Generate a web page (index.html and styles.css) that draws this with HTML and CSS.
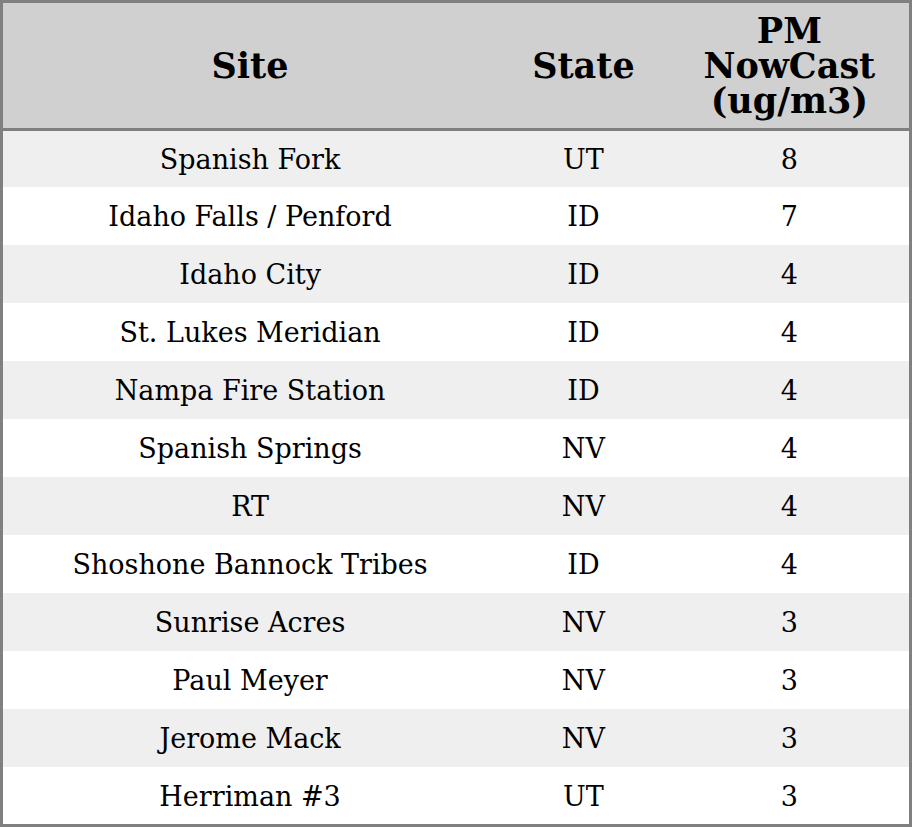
FILE: index.html
```html
<!DOCTYPE html>
<html>
<head>
<meta charset="utf-8">
<link rel="stylesheet" href="styles.css">
</head>
<body>
<table class="aq">
  <colgroup>
    <col class="c-site">
    <col class="c-state">
    <col class="c-pm">
  </colgroup>
  <thead>
    <tr><th>Site</th><th>State</th><th>PM<br>NowCast<br>(ug/m3)</th></tr>
  </thead>
  <tbody>
    <tr class="first"><td>Spanish Fork</td><td>UT</td><td>8</td></tr>
    <tr><td>Idaho Falls / Penford</td><td>ID</td><td>7</td></tr>
    <tr><td>Idaho City</td><td>ID</td><td>4</td></tr>
    <tr><td>St. Lukes Meridian</td><td>ID</td><td>4</td></tr>
    <tr><td>Nampa Fire Station</td><td>ID</td><td>4</td></tr>
    <tr><td>Spanish Springs</td><td>NV</td><td>4</td></tr>
    <tr><td>RT</td><td>NV</td><td>4</td></tr>
    <tr><td>Shoshone Bannock Tribes</td><td>ID</td><td>4</td></tr>
    <tr><td>Sunrise Acres</td><td>NV</td><td>3</td></tr>
    <tr><td>Paul Meyer</td><td>NV</td><td>3</td></tr>
    <tr><td>Jerome Mack</td><td>NV</td><td>3</td></tr>
    <tr class="last"><td>Herriman #3</td><td>UT</td><td>3</td></tr>
  </tbody>
</table>
</body>
</html>
```
FILE: styles.css
```css
html, body {
  margin: 0;
  padding: 0;
  background: #ffffff;
}
.aq {
  width: 912px;
  border-collapse: collapse;
  border: 3px solid #808080;
  font-family: "DejaVu Serif", serif;
  color: #000;
  table-layout: fixed;
}
.c-site { width: 494px; }
.c-state { width: 172px; }
.c-pm { width: 240px; }
.aq th {
  background: #d0d0d0;
  font-size: 35px;
  font-weight: bold;
  line-height: 35px;
  height: 125px;
  padding: 0;
  text-align: center;
  vertical-align: middle;
  border-bottom: 3px solid #808080;
}
.aq td {
  font-size: 27px;
  height: 57px;
  padding: 1px 0 0;
  text-align: center;
  vertical-align: middle;
}
.aq tr.first td { height: 55px; }
.aq tr.last td { height: 56px; }
.aq tbody tr:nth-child(odd) td {
  background: #efefef;
}
.aq tbody tr:nth-child(even) td {
  background: #ffffff;
}
```
